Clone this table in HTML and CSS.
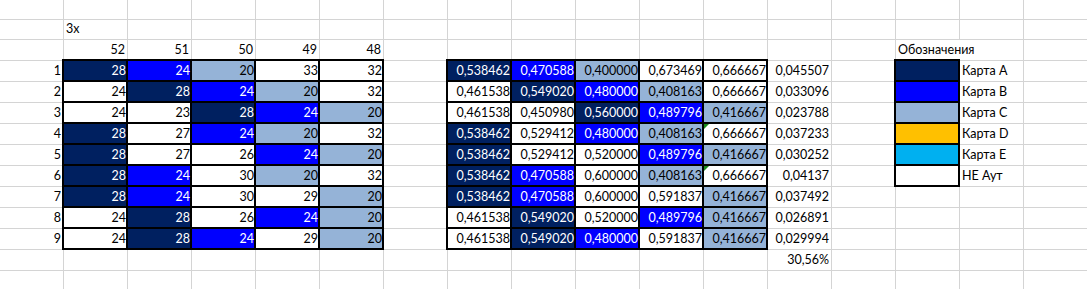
FILE: index.html
```html
<!DOCTYPE html>
<html lang="ru">
<head>
<meta charset="utf-8">
<title>Карты</title>
<link rel="stylesheet" href="styles.css">
</head>
<body>
<div class="sheet">
  <div class="row short">
    <div class="c"></div><div class="c"></div><div class="c"></div><div class="c"></div><div class="c"></div><div class="c"></div><div class="c"></div><div class="c"></div><div class="c"></div><div class="c"></div><div class="c"></div><div class="c"></div><div class="c"></div><div class="c"></div><div class="c"></div><div class="c"></div><div class="c"></div>
  </div>
  <div class="row short">
    <div class="c"></div><div class="c left">3x</div><div class="c"></div><div class="c"></div><div class="c"></div><div class="c"></div><div class="c"></div><div class="c"></div><div class="c"></div><div class="c"></div><div class="c"></div><div class="c"></div><div class="c"></div><div class="c"></div><div class="c"></div><div class="c"></div><div class="c"></div>
  </div>
  <div class="row">
    <div class="c"></div><div class="c">52</div><div class="c">51</div><div class="c">50</div><div class="c">49</div><div class="c">48</div>
    <div class="c"></div><div class="c"></div><div class="c"></div><div class="c"></div><div class="c"></div><div class="c"></div><div class="c"></div><div class="c"></div>
    <div class="c left spill">Обозначения</div><div class="c"></div><div class="c"></div>
  </div>

  <div class="row">
    <div class="c">1</div>
    <div class="c d t s navy">28</div><div class="c d t blue">24</div><div class="c d t sky">20</div><div class="c d t white">33</div><div class="c d t white">32</div>
    <div class="c"></div>
    <div class="c d t s navy">0,538462</div><div class="c d t blue">0,470588</div><div class="c d t sky">0,400000</div><div class="c d t white">0,673469</div><div class="c d t white">0,666667</div>
    <div class="c">0,045507</div><div class="c"></div>
    <div class="c d t s navy"></div><div class="c left">Карта A</div><div class="c"></div>
  </div>
  <div class="row">
    <div class="c">2</div>
    <div class="c d s white">24</div><div class="c d navy">28</div><div class="c d blue">24</div><div class="c d sky">20</div><div class="c d white">32</div>
    <div class="c"></div>
    <div class="c d s white">0,461538</div><div class="c d navy">0,549020</div><div class="c d blue">0,480000</div><div class="c d sky">0,408163</div><div class="c d white">0,666667</div>
    <div class="c">0,033096</div><div class="c"></div>
    <div class="c d s blue"></div><div class="c left">Карта B</div><div class="c"></div>
  </div>
  <div class="row">
    <div class="c">3</div>
    <div class="c d s white">24</div><div class="c d white">23</div><div class="c d navy">28</div><div class="c d blue">24</div><div class="c d sky">20</div>
    <div class="c"></div>
    <div class="c d s white">0,461538</div><div class="c d white">0,450980</div><div class="c d navy">0,560000</div><div class="c d blue">0,489796</div><div class="c d sky">0,416667</div>
    <div class="c">0,023788</div><div class="c"></div>
    <div class="c d s sky"></div><div class="c left">Карта C</div><div class="c"></div>
  </div>
  <div class="row">
    <div class="c">4</div>
    <div class="c d s navy">28</div><div class="c d white">27</div><div class="c d blue">24</div><div class="c d sky">20</div><div class="c d white">32</div>
    <div class="c"></div>
    <div class="c d s navy">0,538462</div><div class="c d white">0,529412</div><div class="c d blue">0,480000</div><div class="c d sky">0,408163</div><div class="c d white flag">0,666667</div>
    <div class="c">0,037233</div><div class="c"></div>
    <div class="c d s gold"></div><div class="c left">Карта D</div><div class="c"></div>
  </div>
  <div class="row">
    <div class="c">5</div>
    <div class="c d s navy">28</div><div class="c d white">27</div><div class="c d white">26</div><div class="c d blue">24</div><div class="c d sky">20</div>
    <div class="c"></div>
    <div class="c d s navy">0,538462</div><div class="c d white">0,529412</div><div class="c d white">0,520000</div><div class="c d blue">0,489796</div><div class="c d sky">0,416667</div>
    <div class="c">0,030252</div><div class="c"></div>
    <div class="c d s cyan"></div><div class="c left">Карта E</div><div class="c"></div>
  </div>
  <div class="row">
    <div class="c">6</div>
    <div class="c d s navy">28</div><div class="c d blue">24</div><div class="c d white">30</div><div class="c d sky">20</div><div class="c d white">32</div>
    <div class="c"></div>
    <div class="c d s navy">0,538462</div><div class="c d blue">0,470588</div><div class="c d white">0,600000</div><div class="c d sky">0,408163</div><div class="c d white flag">0,666667</div>
    <div class="c">0,04137</div><div class="c"></div>
    <div class="c d s white"></div><div class="c left">НЕ Аут</div><div class="c"></div>
  </div>
  <div class="row">
    <div class="c">7</div>
    <div class="c d s navy">28</div><div class="c d blue">24</div><div class="c d white">30</div><div class="c d white">29</div><div class="c d sky">20</div>
    <div class="c"></div>
    <div class="c d s navy">0,538462</div><div class="c d blue">0,470588</div><div class="c d white">0,600000</div><div class="c d white">0,591837</div><div class="c d sky">0,416667</div>
    <div class="c">0,037492</div><div class="c"></div>
    <div class="c"></div><div class="c"></div><div class="c"></div>
  </div>
  <div class="row">
    <div class="c">8</div>
    <div class="c d s white">24</div><div class="c d navy">28</div><div class="c d white">26</div><div class="c d blue">24</div><div class="c d sky">20</div>
    <div class="c"></div>
    <div class="c d s white">0,461538</div><div class="c d navy">0,549020</div><div class="c d white">0,520000</div><div class="c d blue">0,489796</div><div class="c d sky">0,416667</div>
    <div class="c">0,026891</div><div class="c"></div>
    <div class="c"></div><div class="c"></div><div class="c"></div>
  </div>
  <div class="row">
    <div class="c">9</div>
    <div class="c d s white">24</div><div class="c d navy">28</div><div class="c d blue">24</div><div class="c d white">29</div><div class="c d sky">20</div>
    <div class="c"></div>
    <div class="c d s white">0,461538</div><div class="c d navy">0,549020</div><div class="c d blue">0,480000</div><div class="c d white">0,591837</div><div class="c d sky">0,416667</div>
    <div class="c">0,029994</div><div class="c"></div>
    <div class="c"></div><div class="c"></div><div class="c"></div>
  </div>

  <div class="row">
    <div class="c"></div><div class="c"></div><div class="c"></div><div class="c"></div><div class="c"></div><div class="c"></div><div class="c"></div><div class="c"></div><div class="c"></div><div class="c"></div><div class="c"></div><div class="c"></div>
    <div class="c">30,56%</div>
    <div class="c"></div><div class="c"></div><div class="c"></div><div class="c"></div>
  </div>
  <div class="row">
    <div class="c"></div><div class="c"></div><div class="c"></div><div class="c"></div><div class="c"></div><div class="c"></div><div class="c"></div><div class="c"></div><div class="c"></div><div class="c"></div><div class="c"></div><div class="c"></div><div class="c"></div><div class="c"></div><div class="c"></div><div class="c"></div><div class="c"></div>
  </div>
</div>
</body>
</html>
```

FILE: styles.css
```css
html, body {
  margin: 0;
  background: #ffffff;
}

body {
  font-family: Lato, "Open Sans", "Liberation Sans", sans-serif;
  font-size: 12.5px;
  color: #000000;
  overflow: hidden;
}

.sheet {
  display: flex;
  flex-direction: column;
  width: 1088px;
}

.row {
  display: flex;
  flex: none;
  height: 21px;
}

.row.short {
  height: 20px;
}

.c {
  box-sizing: border-box;
  position: relative;
  flex: none;
  width: 64px;
  height: 100%;
  display: flex;
  align-items: flex-end;
  justify-content: flex-end;
  padding: 0 2px 3px 2px;
  line-height: 14px;
  white-space: nowrap;
  border-right: 1px solid #d4d4d4;
  border-bottom: 1px solid #d4d4d4;
}

.c.left {
  justify-content: flex-start;
}

.c.spill {
  border-right-color: transparent;
}

.d {
  border-right: 2px solid #000000;
  border-bottom: 2px solid #000000;
  padding-right: 0;
  padding-bottom: 2px;
}

.d.t {
  box-shadow: 0 -2px 0 #000000;
}

.d.s {
  box-shadow: -2px 0 0 #000000;
}

.d.t.s {
  box-shadow: -2px 0 0 #000000, 0 -2px 0 #000000, -2px -2px 0 #000000;
}

.navy {
  background: #002060;
  color: #ffffff;
}

.blue {
  background: #0000ff;
  color: #ffffff;
}

.sky {
  background: #95b3d7;
}

.gold {
  background: #ffc000;
}

.cyan {
  background: #00b0f0;
}

.white {
  background: #ffffff;
}

.flag::before {
  content: "";
  position: absolute;
  top: 0;
  left: 0;
  border-top: 5px solid #1a8a1a;
  border-right: 5px solid transparent;
}
```
